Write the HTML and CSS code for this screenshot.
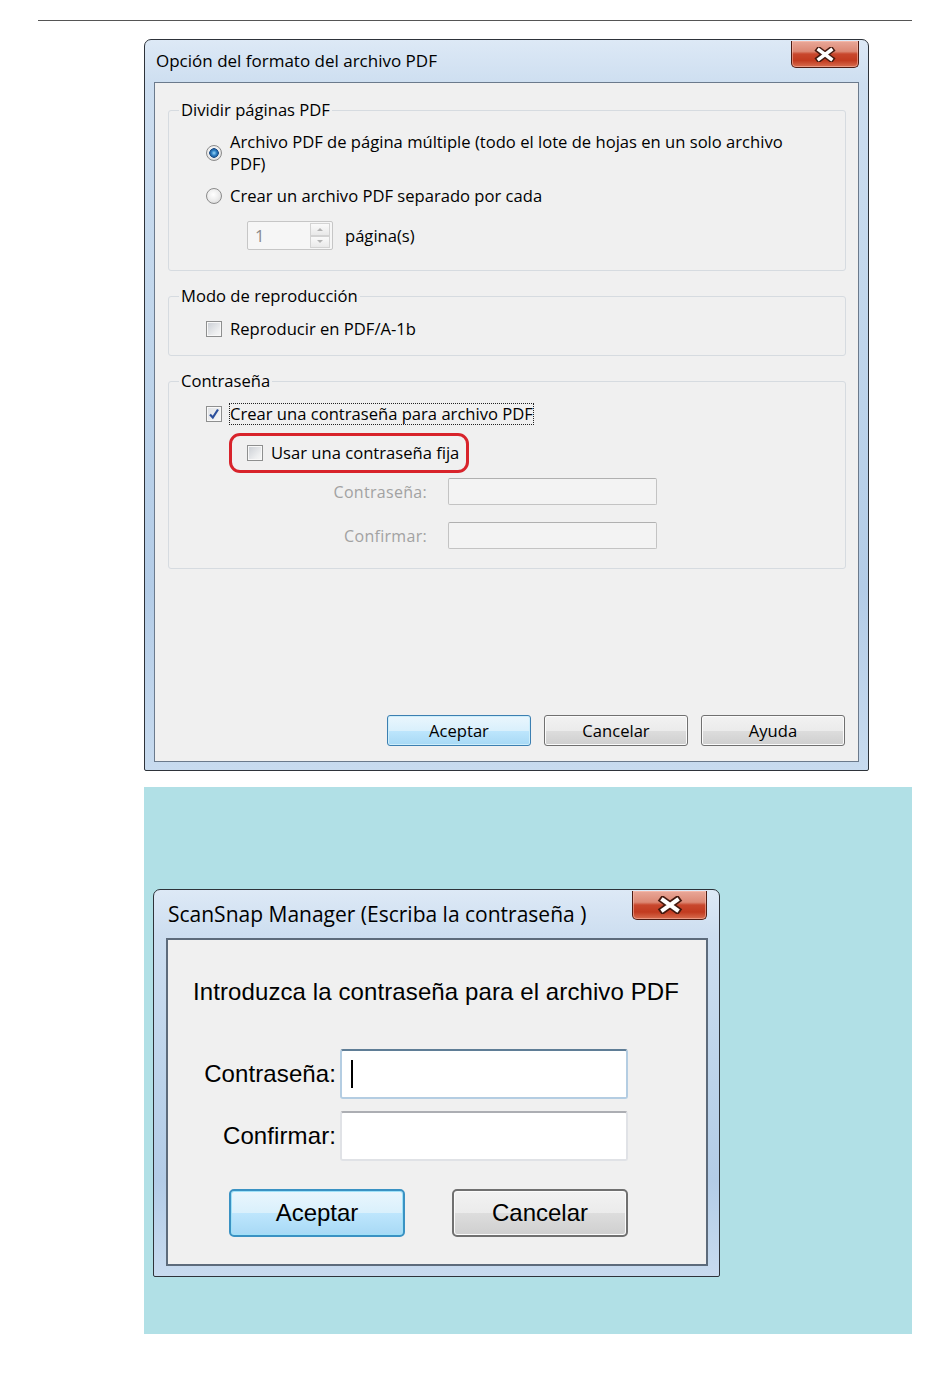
FILE: index.html
```html
<!DOCTYPE html>
<html lang="es">
<head>
    <meta charset="UTF-8">
    <title>Opción del formato del archivo PDF</title>
    <link rel="stylesheet" href="styles.css">
</head>
<body>
    <div class="rule"></div>

    <div class="window win-pdf">
        <div class="titlebar">
            <span class="title">Opción del formato del archivo PDF</span>
            <span class="close">
                <svg width="22" height="15" viewBox="0 0 22 15"><path d="M5 3 L17 12 M17 3 L5 12" stroke="#43190f" stroke-width="6.5" stroke-linecap="square"/><path d="M5 3 L17 12 M17 3 L5 12" stroke="#fff" stroke-width="3.5" stroke-linecap="square"/></svg>
            </span>
        </div>
        <div class="client">
            <fieldset class="group group-split">
                <legend>Dividir páginas PDF</legend>
                <div class="group-body">
                    <div class="option">
                        <span class="radio checked"></span>
                        <span>Archivo PDF de página múltiple (todo el lote de hojas en un solo archivo<br>PDF)</span>
                    </div>
                    <div class="option">
                        <span class="radio"></span>
                        <span>Crear un archivo PDF separado por cada</span>
                    </div>
                    <div class="spin-row">
                        <div class="spin">
                            <span class="spin-value">1</span>
                            <span class="spin-arrows">
                                <span class="spin-up"></span>
                                <span class="spin-down"></span>
                            </span>
                        </div>
                        <span>página(s)</span>
                    </div>
                </div>
            </fieldset>

            <fieldset class="group group-mode">
                <legend>Modo de reproducción</legend>
                <div class="group-body">
                    <div class="option">
                        <span class="check"></span>
                        <span>Reproducir en PDF/A-1b</span>
                    </div>
                </div>
            </fieldset>

            <fieldset class="group group-pass">
                <legend>Contraseña</legend>
                <div class="group-body">
                    <div class="option">
                        <span class="check checked">
                            <svg width="12" height="12" viewBox="0 0 12 12"><path d="M2 6.5 L4.8 9.5 L10 1.5" fill="none" stroke="#2b4f9c" stroke-width="2.2"/></svg>
                        </span>
                        <span class="focus">Crear una contraseña para archivo PDF</span>
                    </div>
                    <div class="highlight">
                        <span class="check"></span>
                        <span>Usar una contraseña fija</span>
                    </div>
                    <div class="fields">
                        <span class="field-label">Contraseña:</span>
                        <span class="field-box"></span>
                        <span class="field-label">Confirmar:</span>
                        <span class="field-box"></span>
                    </div>
                </div>
            </fieldset>

            <div class="buttons">
                <button class="btn btn-default">Aceptar</button>
                <button class="btn">Cancelar</button>
                <button class="btn">Ayuda</button>
            </div>
        </div>
    </div>

    <div class="panel">
        <div class="window win-pass">
            <div class="titlebar">
                <span class="title">ScanSnap Manager (Escriba la contraseña )</span>
                <span class="close">
                    <svg width="26" height="18" viewBox="0 0 26 18"><path d="M6 4 L20 14 M20 4 L6 14" stroke="#43190f" stroke-width="7.5" stroke-linecap="square"/><path d="M6 4 L20 14 M20 4 L6 14" stroke="#fff" stroke-width="4" stroke-linecap="square"/></svg>
                </span>
            </div>
            <div class="client">
                <div class="prompt">Introduzca la contraseña para el archivo PDF</div>
                <div class="pass-fields">
                    <span class="pass-label">Contraseña:</span>
                    <span class="pass-box focused"><span class="caret"></span></span>
                    <span class="pass-label">Confirmar:</span>
                    <span class="pass-box"></span>
                </div>
                <div class="pass-buttons">
                    <button class="btn btn-lg btn-default">Aceptar</button>
                    <button class="btn btn-lg">Cancelar</button>
                </div>
            </div>
        </div>
    </div>
</body>
</html>
```

FILE: styles.css
```css
body {
    margin: 0;
    background: #fff;
    color: #000;
    font-family: "Open Sans", "Noto Sans", sans-serif;
    font-size: 16.6px;
}
.rule {
    height: 1px;
    background: #555;
    margin: 20px 38px 0;
}

/* Aero window frame */
.window {
    box-sizing: border-box;
    display: flex;
    flex-direction: column;
    border: 1px solid #2e333a;
    border-radius: 7px 7px 2px 2px;
    background: linear-gradient(180deg, #dde9f6 0, #cddef0 45px, #bcd3ea 50%, #b3cce7 75%, #c8dbef 100%);
}
.titlebar {
    display: flex;
    justify-content: space-between;
    align-items: flex-start;
    padding-left: 2px;
}
.title { font-size: 17px; }
.close {
    display: flex;
    align-items: center;
    justify-content: center;
    border: 1px solid #4e1c13;
    border-top: none;
    border-radius: 0 0 5px 5px;
    background: linear-gradient(180deg, #e9a899 0, #dc8874 40%, #c8472d 50%, #c23b20 75%, #d86e50 100%);
    box-shadow: inset 0 0 0 1px rgba(255, 200, 185, 0.5);
}
.client {
    flex: 1;
    display: flex;
    flex-direction: column;
    background: #f0f0f0;
    border: 1px solid #6b7a8c;
}

/* first dialog */
.win-pdf {
    width: 725px;
    height: 732px;
    margin: 18px 0 0 144px;
    padding: 0 9px 8px;
}
.win-pdf .titlebar { height: 42px; }
.win-pdf .title { line-height: 42px; }
.win-pdf .close {
    width: 66px;
    height: 26px;
    margin-top: 1px;
}
.win-pdf .client { padding-top: 17px; }

.group {
    margin: 0 12px 0 13px;
    padding: 12px 0 15px;
    border: 1px solid #d6dbe0;
    border-radius: 3px;
    min-width: 0;
}
.group + .group { margin-top: 15px; }
.group legend {
    margin-left: 10px;
    padding: 0 2px;
    line-height: 20px;
}
.group-body { padding-left: 37px; }
.group-split { padding: 11px 0 20px; }
.group-pass { padding: 12px 0 19px; }

.option {
    display: flex;
    align-items: center;
    gap: 8px;
    line-height: 22px;
}
.option + .option { margin-top: 10px; }

.radio {
    flex: none;
    width: 16px;
    height: 16px;
    box-sizing: border-box;
    border-radius: 50%;
    border: 1px solid #8b8b8b;
    background: radial-gradient(circle at 45% 40%, #ffffff 0, #ebebeb 55%, #cdcdcd 100%);
}
.radio.checked {
    background:
        radial-gradient(circle at 50% 50%, #9ad6f7 0, #2f82c6 2.5px, #1c4d86 4.5px, transparent 5px),
        radial-gradient(circle at 45% 40%, #ffffff 0, #ebebeb 55%, #cdcdcd 100%);
}
.check {
    flex: none;
    display: flex;
    align-items: center;
    justify-content: center;
    width: 16px;
    height: 16px;
    box-sizing: border-box;
    border: 1px solid #8e8f8f;
    background: linear-gradient(135deg, #c9cdd3 0, #eeeff0 70%, #f7f7f7 100%);
    box-shadow: inset 0 0 0 1px #f8f8f8;
}
.check.checked { background: linear-gradient(135deg, #dfe2e6 0, #f6f6f6 100%); }
.focus {
    margin-left: -1px;
    border: 1px dotted #222;
    line-height: 20px;
}

.spin-row {
    display: flex;
    align-items: center;
    gap: 12px;
    margin: 14px 0 0 41px;
    line-height: 22px;
}
.spin {
    display: flex;
    width: 86px;
    height: 29px;
    box-sizing: border-box;
    border: 1px solid #c6c6c6;
    border-radius: 2px;
    background: #f6f6f6;
}
.spin-value {
    flex: 1;
    padding-left: 7px;
    line-height: 27px;
    color: #8a8a8a;
}
.spin-arrows {
    display: flex;
    flex-direction: column;
    width: 20px;
    margin: 1px 2px 1px 0;
}
.spin-up, .spin-down {
    flex: 1;
    display: flex;
    align-items: center;
    justify-content: center;
    border: 1px solid #d3d3d3;
    background: linear-gradient(180deg, #fafafa, #e9e9e9);
}
.spin-up::after {
    content: "";
    border: 3px solid transparent;
    border-bottom: 3px solid #b3b3b3;
    border-top: none;
}
.spin-down::after {
    content: "";
    border: 3px solid transparent;
    border-top: 3px solid #b3b3b3;
    border-bottom: none;
}

.highlight {
    display: flex;
    align-items: center;
    gap: 8px;
    width: 240px;
    height: 40px;
    box-sizing: border-box;
    margin: 8px 0 0 23px;
    padding-left: 15px;
    border: 3px solid #d8232b;
    border-radius: 11px;
    line-height: 22px;
}
.fields {
    display: grid;
    grid-template-columns: 221px 209px;
    column-gap: 21px;
    row-gap: 17px;
    align-items: center;
    margin-top: 5px;
}
.field-label {
    text-align: right;
    color: #a2a2a2;
    letter-spacing: 0.3px;
    font-size: 16px;
}
.field-box {
    height: 27px;
    box-sizing: border-box;
    border: 1px solid #c3c3c3;
    border-top-color: #b0b0b0;
    border-radius: 2px;
    background: #f3f3f3;
}

.buttons {
    margin-top: auto;
    display: flex;
    justify-content: flex-end;
    gap: 13px;
    padding: 0 13px 15px;
}
.btn {
    width: 144px;
    height: 31px;
    box-sizing: border-box;
    padding: 0;
    border: 1px solid #707070;
    border-radius: 3px;
    background: linear-gradient(180deg, #f2f2f2 0, #ebebeb 50%, #dddddd 50%, #cfcfcf 100%);
    box-shadow: inset 0 0 0 1px #fbfbfb;
    font: inherit;
    color: #000;
    line-height: 29px;
}
.btn-default {
    border-color: #3c7fb1;
    background: linear-gradient(180deg, #eaf6fd 0, #d9f0fc 50%, #bee6fd 50%, #a7d9f5 100%);
    box-shadow: inset 0 0 0 1px #cdeefb;
}

/* second dialog */
.panel {
    box-sizing: border-box;
    width: 768px;
    height: 547px;
    margin: 16px 0 0 144px;
    padding: 102px 0 0 9px;
    background: #b1e0e6;
}
.win-pass {
    width: 567px;
    height: 388px;
    padding: 0 11px 10px 12px;
}
.win-pass .titlebar { height: 48px; }
.win-pass .title {
    line-height: 48px;
    font-size: 21px;
}
.win-pass .close {
    width: 73px;
    height: 28px;
    margin: 1px 1px 0 0;
}
.win-pass .client {
    border-width: 2px;
    border-color: #5d6b7b;
    font-family: "Liberation Sans", Arial, sans-serif;
    font-size: 24px;
    letter-spacing: 0.1px;
}
.prompt {
    margin: 38px 0 0 25px;
    line-height: 28px;
}
.pass-fields {
    display: grid;
    grid-template-columns: 168px 288px;
    column-gap: 4px;
    row-gap: 12px;
    align-items: center;
    margin-top: 43px;
}
.pass-label { text-align: right; }
.pass-box {
    display: flex;
    align-items: center;
    height: 50px;
    box-sizing: border-box;
    border: 2px solid #e0e2e6;
    border-top-color: #acaeb3;
    border-radius: 3px;
    background: #fff;
}
.pass-box.focused {
    border-color: #b4cde2;
    border-top-color: #5f7d96;
}
.caret {
    width: 2px;
    height: 28px;
    margin-left: 9px;
    background: #000;
}
.pass-buttons {
    display: flex;
    gap: 47px;
    margin: 28px 0 0 61px;
}
.btn-lg {
    width: 176px;
    height: 48px;
    border-width: 2px;
    border-radius: 5px;
    font: 24px "Liberation Sans", Arial, sans-serif;
    line-height: 44px;
}
.btn-lg.btn-default {
    border-color: #3a92c3;
    box-shadow: inset 0 0 0 1px #9fe1f8;
}
```
